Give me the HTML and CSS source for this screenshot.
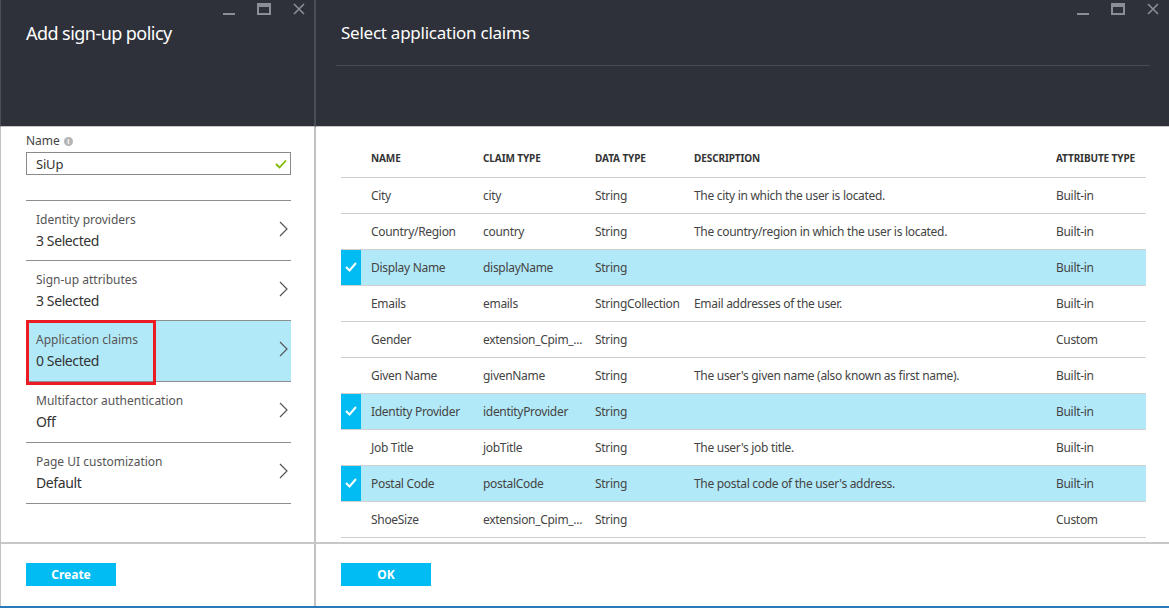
FILE: index.html
```html
<!DOCTYPE html>
<html>
<head>
<meta charset="utf-8">
<link rel="stylesheet" href="styles.css">
</head>
<body>
<div class="app">
  <section class="blade blade-left">
    <header class="blade-head">
      <div class="controls">
        <svg class="ctl" width="14" height="14" viewBox="0 0 14 14"><rect x="1" y="11" width="12" height="2" fill="#8b8e93"/></svg>
        <svg class="ctl" width="14" height="14" viewBox="0 0 14 14"><rect x="1" y="2" width="12" height="10" fill="none" stroke="#8b8e93" stroke-width="2"/><rect x="1" y="2" width="12" height="3" fill="#8b8e93"/></svg>
        <svg class="ctl" width="14" height="14" viewBox="0 0 14 14"><path d="M2 2 L12 12 M12 2 L2 12" stroke="#8b8e93" stroke-width="1.6"/></svg>
      </div>
      <h1 class="title">Add sign-up policy</h1>
    </header>
    <div class="blade-body left-body">
      <label class="field-label">Name <span class="info">i</span></label>
      <div class="input">
        <span>SiUp</span>
        <svg width="12" height="10" viewBox="0 0 12 10"><path d="M1 5 L4.5 8.5 L11 1.5" fill="none" stroke="#7fba00" stroke-width="1.8"/></svg>
      </div>
      <ul class="items">
        <li class="item"><div class="item-text"><div class="item-label">Identity providers</div><div class="item-value">3 Selected</div></div><svg class="chev" width="9" height="16" viewBox="0 0 9 16"><path d="M1 1 L8 8 L1 15" fill="none" stroke="#555" stroke-width="1.2"/></svg></li>
        <li class="item"><div class="item-text"><div class="item-label">Sign-up attributes</div><div class="item-value">3 Selected</div></div><svg class="chev" width="9" height="16" viewBox="0 0 9 16"><path d="M1 1 L8 8 L1 15" fill="none" stroke="#555" stroke-width="1.2"/></svg></li>
        <li class="item active"><div class="item-text"><div class="item-label">Application claims</div><div class="item-value">0 Selected</div></div><svg class="chev" width="9" height="16" viewBox="0 0 9 16"><path d="M1 1 L8 8 L1 15" fill="none" stroke="#555" stroke-width="1.2"/></svg><span class="redbox"></span></li>
        <li class="item"><div class="item-text"><div class="item-label">Multifactor authentication</div><div class="item-value">Off</div></div><svg class="chev" width="9" height="16" viewBox="0 0 9 16"><path d="M1 1 L8 8 L1 15" fill="none" stroke="#555" stroke-width="1.2"/></svg></li>
        <li class="item"><div class="item-text"><div class="item-label">Page UI customization</div><div class="item-value">Default</div></div><svg class="chev" width="9" height="16" viewBox="0 0 9 16"><path d="M1 1 L8 8 L1 15" fill="none" stroke="#555" stroke-width="1.2"/></svg></li>
      </ul>
    </div>
    <footer class="blade-foot"><button class="btn">Create</button></footer>
  </section>

  <section class="blade blade-right">
    <header class="blade-head right-head">
      <div class="controls controls-right">
        <svg class="ctl" width="14" height="14" viewBox="0 0 14 14"><rect x="1" y="11" width="12" height="2" fill="#8b8e93"/></svg>
        <svg class="ctl" width="14" height="14" viewBox="0 0 14 14"><rect x="1" y="2" width="12" height="10" fill="none" stroke="#8b8e93" stroke-width="2"/><rect x="1" y="2" width="12" height="3" fill="#8b8e93"/></svg>
        <svg class="ctl" width="14" height="14" viewBox="0 0 14 14"><path d="M2 2 L12 12 M12 2 L2 12" stroke="#8b8e93" stroke-width="1.6"/></svg>
      </div>
      <h1 class="title title-right">Select application claims</h1>
      <div class="head-rule"></div>
    </header>
    <div class="blade-body right-body">
      <table class="claims">
        <thead>
          <tr><th class="c-check"></th><th class="c-name">NAME</th><th class="c-claim">CLAIM TYPE</th><th class="c-data">DATA TYPE</th><th class="c-desc">DESCRIPTION</th><th class="c-attr">ATTRIBUTE TYPE</th></tr>
        </thead>
        <tbody>
          <tr><td class="c-check"></td><td>City</td><td>city</td><td>String</td><td>The city in which the user is located.</td><td>Built-in</td></tr>
          <tr><td class="c-check"></td><td>Country/Region</td><td>country</td><td>String</td><td>The country/region in which the user is located.</td><td>Built-in</td></tr>
          <tr class="sel"><td class="c-check"><svg width="12" height="10" viewBox="0 0 12 10"><path d="M1 5 L4.5 8.5 L11 1" fill="none" stroke="#fff" stroke-width="2"/></svg></td><td>Display Name</td><td>displayName</td><td>String</td><td></td><td>Built-in</td></tr>
          <tr><td class="c-check"></td><td>Emails</td><td>emails</td><td>StringCollection</td><td>Email addresses of the user.</td><td>Built-in</td></tr>
          <tr><td class="c-check"></td><td>Gender</td><td>extension_Cpim_...</td><td>String</td><td></td><td>Custom</td></tr>
          <tr><td class="c-check"></td><td>Given Name</td><td>givenName</td><td>String</td><td>The user's given name (also known as first name).</td><td>Built-in</td></tr>
          <tr class="sel"><td class="c-check"><svg width="12" height="10" viewBox="0 0 12 10"><path d="M1 5 L4.5 8.5 L11 1" fill="none" stroke="#fff" stroke-width="2"/></svg></td><td>Identity Provider</td><td>identityProvider</td><td>String</td><td></td><td>Built-in</td></tr>
          <tr><td class="c-check"></td><td>Job Title</td><td>jobTitle</td><td>String</td><td>The user's job title.</td><td>Built-in</td></tr>
          <tr class="sel"><td class="c-check"><svg width="12" height="10" viewBox="0 0 12 10"><path d="M1 5 L4.5 8.5 L11 1" fill="none" stroke="#fff" stroke-width="2"/></svg></td><td>Postal Code</td><td>postalCode</td><td>String</td><td>The postal code of the user's address.</td><td>Built-in</td></tr>
          <tr><td class="c-check"></td><td>ShoeSize</td><td>extension_Cpim_...</td><td>String</td><td></td><td>Custom</td></tr>
        </tbody>
      </table>
    </div>
    <footer class="blade-foot right-foot"><button class="btn">OK</button></footer>
  </section>
</div>
</body>
</html>
```

FILE: styles.css
```css
* { box-sizing: border-box; }
html, body { margin: 0; padding: 0; background: #fff; }
body {
  font-family: "Noto Sans", "Open Sans", sans-serif;
  color: #444;
  width: 1169px;
  height: 610px;
  overflow: hidden;
}
.app {
  display: flex;
  height: 608px;
  border-bottom: 2px solid #2a7ab8;
}
.blade {
  display: flex;
  flex-direction: column;
  height: 100%;
}
.blade-left {
  width: 316px;
  border-left: 1px solid #c2c2c2;
  border-right: 2px solid #c2c2c2;
}
.blade-right { flex: 1; }
.blade-head {
  background: #2e3139;
  height: 127px;
  flex: none;
  border-bottom: 1px solid #c8c8c8;
}
.blade-left .blade-head { margin-right: -2px; border-right: 2px solid #4a4e55; margin-left: -1px; border-left: 1px solid #4a4e55; }
.controls {
  display: flex;
  justify-content: flex-end;
  gap: 21px;
  padding: 2px 8px 0 0;
  height: 18px;
}
.controls-right { padding-right: 9px; }
.title {
  margin: 0;
  font-weight: normal;
  color: #fff;
  font-size: 18px;
  line-height: 24px;
  padding: 3px 0 0 25px;
  letter-spacing: -0.55px;
}
.title-right {
  padding-left: 25px;
  font-size: 17px;
  letter-spacing: -0.25px;
}
.head-rule {
  margin: 20px 19px 0 20px;
  height: 1px;
  background: #474b53;
}
.blade-body { flex: 1; }
.left-body { padding: 6px 23px 0 25px; }
.field-label {
  display: flex;
  align-items: center;
  font-size: 12px;
  color: #444;
  line-height: 16px;
  gap: 4px;
}
.info {
  display: inline-flex;
  justify-content: center;
  align-items: center;
  width: 9px;
  height: 9px;
  border-radius: 50%;
  background: #b4b4b4;
  color: #fff;
  font-size: 7px;
  font-weight: bold;
  line-height: 1;
}
.input {
  margin-top: 3px;
  height: 23px;
  border: 1px solid #8a8a8a;
  display: flex;
  align-items: center;
  justify-content: space-between;
  padding: 0 3px 0 9px;
  font-size: 13px;
  color: #333;
  letter-spacing: -0.2px;
}
.items {
  list-style: none;
  margin: 25px 0 0 0;
  padding: 0;
  border-top: 1px solid #8e8e8e;
}
.item {
  position: relative;
  height: 61px;
  border-bottom: 1px solid #8e8e8e;
  display: flex;
  align-items: flex-start;
  justify-content: space-between;
  padding: 0 3px 0 10px;
}
.item:nth-child(-n+2) { height: 60px; }
.item.active { background: #b2e9f8; }
.item-text { padding-top: 10px; }
.item-label { font-size: 12px; line-height: 18px; color: #555; }
.item-value { font-size: 14px; line-height: 23px; color: #333; letter-spacing: -0.4px; }
.chev { margin-top: 20px; }
.redbox {
  position: absolute;
  left: 0;
  top: -1px;
  width: 130px;
  height: 65px;
  border: 3px solid #ec1c24;
}
.blade-foot {
  height: 64px;
  flex: none;
  border-top: 2px solid #c8c8c8;
  padding: 18px 0 0 25px;
}
.blade-left .blade-foot { margin-right: -2px; }
.btn {
  width: 90px;
  height: 23px;
  background: #00bcf2;
  border: none;
  color: #fff;
  font-family: "Noto Sans", "Open Sans", sans-serif;
  font-weight: bold;
  font-size: 12px;
  padding: 0;
}
.right-body { padding: 13px 23px 0 25px; }
.claims {
  width: 805px;
  border-collapse: collapse;
  table-layout: fixed;
  font-size: 12px;
  color: #444;
  letter-spacing: -0.3px;
}
.claims th {
  text-align: left;
  font-size: 10px;
  font-weight: bold;
  color: #333;
  height: 37px;
  padding: 0 0 0 10px;
  border-bottom: 1px solid #cfcfcf;
  letter-spacing: -0.1px;
}
.claims td {
  height: 36px;
  padding: 0 0 0 10px;
  border-bottom: 1px solid #cfcfcf;
  white-space: nowrap;
}
.claims .c-check { width: 20px; padding: 0; text-align: center; }
.claims .c-name { width: 112px; }
.claims .c-claim { width: 112px; }
.claims .c-data { width: 99px; }
.claims .c-desc { width: 362px; }
.claims .c-attr { width: 100px; }
.claims tr.sel td { background: #b2e9f8; }
.claims tr.sel td.c-check { background: #00bcf2; }
.claims td.c-check svg { display: block; margin: 0 auto; }
```
